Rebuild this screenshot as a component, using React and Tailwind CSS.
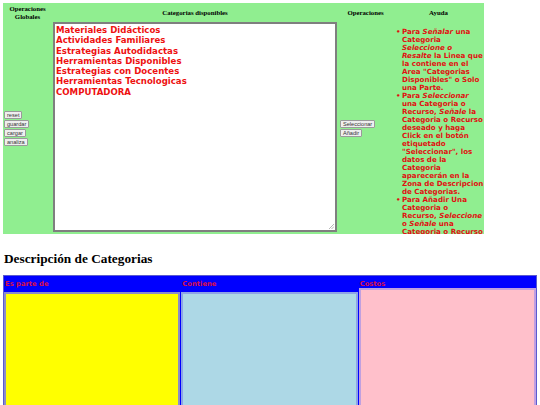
const categorias = [
  "Materiales Didácticos",
  "Actividades Familiares",
  "Estrategias Autodidactas",
  "Herramientas Disponibles",
  "Estrategias con Docentes",
  "Herramientas Tecnologicas",
  "COMPUTADORA",
];

function Boton({ children }) {
  return (
    <button className="block h-[8px] mb-[1px] px-[2px] bg-[#efefef] border border-[#9a9a9a] rounded-[1px] text-[5.6px] leading-[6px] text-[#333] font-['Liberation_Sans',sans-serif]">
      {children}
    </button>
  );
}

function Cabecera({ children }) {
  return (
    <div className="h-[19px] flex items-center justify-center text-center text-[6.8px] leading-[8px] font-bold text-black font-['Liberation_Serif',serif]">
      {children}
    </div>
  );
}

function Punto({ children }) {
  return (
    <li className="flex">
      <span className="w-[9px] shrink-0 pl-[3px]">•</span>
      <span>{children}</span>
    </li>
  );
}

export default function App() {
  return (
    <div className="w-[540px] h-[405px] overflow-hidden bg-white">
      {/* tabla superior */}
      <div className="ml-[3px] pt-[3px]">
        <div className="w-[481px] h-[231px] bg-[#90ee90] flex">
          <div className="w-[49px] flex flex-col">
            <Cabecera>
              Operaciones
              <br />
              Globales
            </Cabecera>
            <div className="flex-1 flex flex-col items-start justify-center pl-[1px] pt-[1px]">
              <Boton>reset</Boton>
              <Boton>guardar</Boton>
              <Boton>cargar</Boton>
              <Boton>analiza</Boton>
            </div>
          </div>

          <div className="w-[286px] flex flex-col">
            <Cabecera>Categorias disponibles</Cabecera>
            <div className="relative h-[210px] ml-[0.5px] mr-[1px] bg-white border-2 border-[#7f7f7f] px-[1.5px] pt-[1px]">
              {categorias.map((c) => (
                <div
                  key={c}
                  className="text-[8.6px] leading-[10.3px] font-bold text-[#ee1111] font-['DejaVu_Sans',sans-serif]"
                >
                  {c}
                </div>
              ))}
              <svg className="absolute right-[1px] bottom-[1px]" width="5" height="5" viewBox="0 0 5 5">
                <path d="M0 5 L5 0 M2.5 5 L5 2.5" stroke="#999" strokeWidth="0.7" />
              </svg>
            </div>
          </div>

          <div className="w-[55px] flex flex-col">
            <Cabecera>Operaciones</Cabecera>
            <div className="flex-1 flex flex-col items-start justify-center pl-[2px] pt-[1px]">
              <Boton>Seleccionar</Boton>
              <Boton>Añadir</Boton>
            </div>
          </div>

          <div className="w-[91px] flex flex-col">
            <Cabecera>Ayuda</Cabecera>
            <div className="flex-1 overflow-hidden pt-[6px]">
              <ul className="text-[7.1px] leading-[8px] font-bold text-[#e01010] font-['DejaVu_Sans',sans-serif] whitespace-nowrap">
                <Punto>
                  Para <i>Señalar</i> una
                  <br />
                  Categoria
                  <br />
                  <i>Seleccione o</i>
                  <br />
                  <i>Resalte</i> la Linea que
                  <br />
                  la contiene en el
                  <br />
                  Area "Categorias
                  <br />
                  Disponibles" o Solo
                  <br />
                  una Parte.
                </Punto>
                <Punto>
                  Para <i>Seleccionar</i>
                  <br />
                  una Categoria o
                  <br />
                  Recurso, <i>Señale</i> la
                  <br />
                  Categoria o Recurso
                  <br />
                  deseado y haga
                  <br />
                  Click en el botón
                  <br />
                  etiquetado
                  <br />
                  "Seleccionar", los
                  <br />
                  datos de la
                  <br />
                  Categoria
                  <br />
                  aparecerán en la
                  <br />
                  Zona de Descripcion
                  <br />
                  de Categorias.
                </Punto>
                <Punto>
                  Para Añadir Una
                  <br />
                  Categoria o
                  <br />
                  Recurso, <i>Seleccione</i>
                  <br />
                  o <i>Señale</i> una
                  <br />
                  Categoria o Recurso
                  <br />
                  de la Lista
                </Punto>
              </ul>
            </div>
          </div>
        </div>
      </div>

      {/* descripcion */}
      <h2 className="ml-[4px] mt-[17px] text-[13.3px] leading-[16px] font-bold text-black font-['Liberation_Serif',serif]">
        Descripción de Categorias
      </h2>

      <div className="ml-[3px] mt-[8px] w-[534px] bg-[#0000ff] border border-[#5a5ad0] grid grid-cols-3">
        <div className="flex flex-col">
          <div className="h-[16px] flex items-center pl-[1px] text-[6.8px] font-bold text-[#d81048] font-['DejaVu_Sans',sans-serif]">
            Es parte de
          </div>
          <div className="mr-[1px] h-[140px] bg-[#ffff00] border-2 border-[#8c8cc8]" />
        </div>
        <div className="flex flex-col">
          <div className="h-[16px] flex items-center pl-[1px] text-[6.8px] font-bold text-[#d81048] font-['DejaVu_Sans',sans-serif]">
            Contiene
          </div>
          <div className="mr-[1px] h-[140px] bg-[#add8e6] border-2 border-[#8ea4e6]" />
        </div>
        <div className="flex flex-col">
          <div className="h-[12px] flex items-end pl-[1px] text-[6.8px] leading-[8px] font-bold text-[#d81048] font-['DejaVu_Sans',sans-serif]">
            Costos
          </div>
          <div className="h-[144px] bg-[#ffc0cb] border-2 border-[#c0a0e0]" />
        </div>
      </div>
    </div>
  );
}
